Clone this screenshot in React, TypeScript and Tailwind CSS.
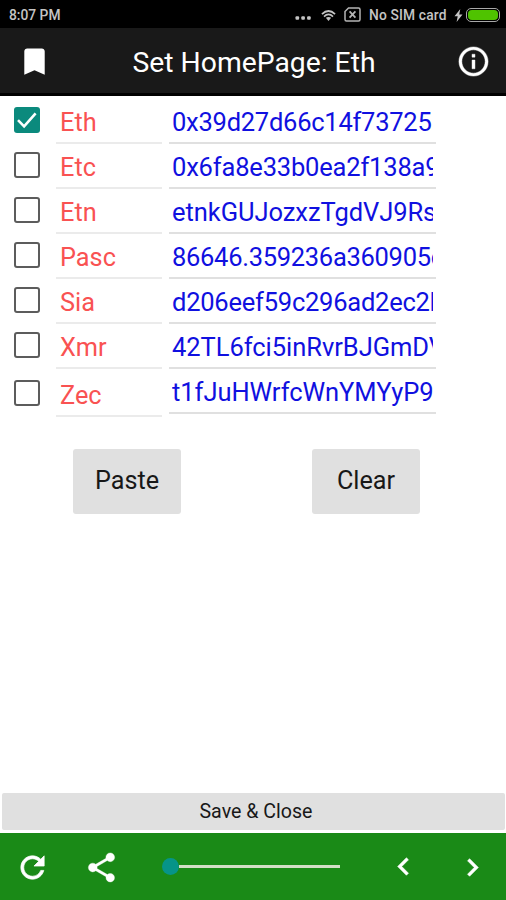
import { MdBookmark } from 'react-icons/md';

type Wallet = { name: string; address: string; spacing: string; checked?: boolean; last?: boolean };

const wallets: Wallet[] = [
  { name: 'Eth', address: '0x39d27d66c14f73725', spacing: 'tracking-[-0.25px]', checked: true },
  { name: 'Etc', address: '0x6fa8e33b0ea2f138a9', spacing: 'tracking-[-0.18px]' },
  { name: 'Etn', address: 'etnkGUJozxzTgdVJ9Rs', spacing: 'tracking-[-0.06px]' },
  { name: 'Pasc', address: '86646.359236a360905c', spacing: 'tracking-[-0.29px]' },
  { name: 'Sia', address: 'd206eef59c296ad2ec2b', spacing: 'tracking-[-0.23px]' },
  { name: 'Xmr', address: '42TL6fci5inRvrBJGmDV', spacing: 'tracking-[-0.04px]' },
  { name: 'Zec', address: 't1fJuHWrfcWnYMYyP9', spacing: 'tracking-[-0.05px]', last: true },
];

function Icon({ path, weight, className = '' }: { path: string; weight: number; className?: string }) {
  return (
    <svg className={`shrink-0 ${className}`} width="35" height="35" viewBox="0 0 24 24" fill="#fff" stroke="#fff" strokeWidth={weight}>
      <path d={path} />
    </svg>
  );
}

const INFO =
  'M11 7h2v2h-2zm0 4h2v6h-2zm1-9C6.48 2 2 6.48 2 12s4.48 10 10 10 10-4.48 10-10S17.52 2 12 2zm0 18c-4.41 0-8-3.59-8-8s3.59-8 8-8 8 3.59 8 8-3.59 8-8 8z';
const REFRESH =
  'M17.65 6.35C16.2 4.9 14.21 4 12 4c-4.42 0-7.99 3.58-7.99 8s3.57 8 7.99 8c3.73 0 6.84-2.55 7.73-6h-2.08c-.82 2.33-3.04 4-5.65 4-3.31 0-6-2.69-6-6s2.69-6 6-6c1.66 0 3.14.69 4.22 1.78L13 11h7V4l-2.35 2.35z';
const SHARE =
  'M18 16.08c-.76 0-1.44.3-1.96.77L8.91 12.7c.05-.23.09-.46.09-.7s-.04-.47-.09-.7l7.05-4.11c.54.5 1.25.81 2.04.81 1.66 0 3-1.34 3-3s-1.34-3-3-3-3 1.34-3 3c0 .24.04.47.09.7L8.04 9.81C7.5 9.31 6.79 9 6 9c-1.66 0-3 1.34-3 3s1.34 3 3 3c.79 0 1.5-.31 2.04-.81l7.12 4.16c-.05.21-.08.43-.08.65 0 1.61 1.31 2.92 2.92 2.92s2.92-1.31 2.92-2.92-1.31-2.92-2.92-2.92z';
const LEFT = 'M15.41 7.41L14 6l-6 6 6 6 1.41-1.41L10.83 12z';
const RIGHT = 'M10 6L8.59 7.41 13.17 12l-4.58 4.59L10 18l6-6z';

function StatusBar() {
  return (
    <div className="flex h-7 items-center bg-black pl-[9px] pr-[6px] pt-[2px] text-[13.8px] font-medium text-[#c4c4c4]">
      <span>8:07 PM</span>
      <svg className="ml-auto mt-[6px]" width="17" height="4" viewBox="0 0 17 4" fill="#c4c4c4">
        <rect x="0.5" y="0.3" width="3.6" height="3.4" rx="1" />
        <rect x="6.3" y="0.3" width="3.6" height="3.4" rx="1" />
        <rect x="12.1" y="0.3" width="3.6" height="3.4" rx="1" />
      </svg>
      <svg className="ml-[9px]" width="15" height="13" viewBox="0 0 16 13" fill="none" stroke="#c4c4c4" strokeWidth="1.8">
        <path d="M1 5Q8-1.6 15 5" />
        <path d="M3.2 7.6Q8 3.2 12.8 7.6" />
        <path d="M5.2 9Q8 7 10.8 9L8 12.4Z" fill="#c4c4c4" stroke="none" />
      </svg>
      <svg className="ml-[8px] mb-px" width="17" height="15" viewBox="0 0 17 15" fill="none" stroke="#b4b4b4" strokeWidth="1.5">
        <path d="M4.5 1H14.5Q16 1 16 2.5V12.5Q16 14 14.5 14H2.5Q1 14 1 12.5V4.5Z" />
        <path d="M5.6 4.4L11.4 10.6M11.4 4.4L5.6 10.6" strokeWidth="1.8" />
      </svg>
      <span className="ml-[8px] w-[78px] whitespace-nowrap tracking-[0.15px]">No SIM card</span>
      <svg className="ml-[7px]" width="9" height="13" viewBox="0 0 9 13" fill="#c4c4c4">
        <path d="M6.3 0L0.5 7.3H3.7L2.6 13L8.5 5.4H5.2Z" />
      </svg>
      <div className="ml-[3px] h-[14px] w-[34px] rounded-[5px] border border-[#a8a8a8] p-px">
        <div className="h-full rounded-[4px] bg-[#4fc300]" />
      </div>
    </div>
  );
}

function Checkbox({ checked }: { checked?: boolean }) {
  if (checked) {
    return (
      <div className="size-[26px] rounded-[3px] bg-[#0b8a7d]">
        <svg width="26" height="26" viewBox="0 0 26 26" fill="none" stroke="#fff" strokeWidth="2.6">
          <path d="M4 13.2L10.1 19.3L21.6 6.4" />
        </svg>
      </div>
    );
  }
  return <div className="size-[26px] rounded-[3px] border-[2.5px] border-[#5c5c5c]" />;
}

export default function App() {
  return (
    <div className="flex h-[900px] w-[506px] flex-col overflow-hidden bg-white font-[Roboto,sans-serif]">
      <StatusBar />
      <header className="flex h-[68px] items-center justify-between border-b-[3px] border-black bg-[#191919] pl-[17px] pr-[15px] text-white">
        <MdBookmark size={35} className="mt-px" />
        <h1 className="whitespace-nowrap pt-[4px] text-[28.3px] leading-8">Set HomePage: Eth</h1>
        <Icon path={INFO} weight={0.3} className="mt-[2px]" />
      </header>

      <main className="flex flex-1 flex-col">
        <div className="flex pl-[14px]">
          <div className="flex flex-col pt-[11px]">
            {wallets.map((w) => (
              <div key={w.name} className={w.last ? 'h-[45px] pt-[3px]' : 'h-[45px]'}>
                <Checkbox checked={w.checked} />
              </div>
            ))}
          </div>
          <div className="ml-4 flex w-[106px] flex-col pt-[3px] text-[25.3px] leading-[30px] text-[#f95252]">
            {wallets.map((w) => (
              <div key={w.name} className={`border-b-2 border-[#ebebeb] pl-[4px] ${w.last ? 'h-[48px] pt-[12px]' : 'h-[45px] pt-[9px]'}`}>
                {w.name}
              </div>
            ))}
          </div>
          <div className="ml-[7px] flex w-[267px] flex-col pt-[3px] text-[25.5px] leading-[30px] text-[#1010e0]">
            {wallets.map((w) => (
              <div key={w.name} className="h-[45px] border-b-2 border-[#e0e0e0] pl-[3px] pr-[3px] pt-[8px]">
                <div className={`overflow-hidden whitespace-nowrap ${w.spacing}`}>{w.address}</div>
              </div>
            ))}
          </div>
        </div>

        <div className="mt-[27px] flex gap-[131px] pl-[73px] text-[25.2px] text-[#181818]">
          <button className="h-[65px] w-[108px] rounded-[3px] bg-[#e0e0e0] pb-[2px]">Paste</button>
          <button className="h-[65px] w-[108px] rounded-[3px] bg-[#e0e0e0] pb-[2px]">Clear</button>
        </div>

        <button className="mb-[3px] ml-[2px] mr-px mt-auto h-[37px] rounded-[2px] bg-[#e0e0e0] pl-[5px] text-[19.6px] text-[#181818]">
          Save &amp; Close
        </button>
      </main>

      <footer className="flex h-[67px] items-center bg-[#1a8a17] pl-[15px] text-white">
        <Icon path={REFRESH} weight={0.5} className="mt-px" />
        <Icon path={SHARE} weight={0.25} className="ml-[34px] mt-px" />
        <div className="ml-[43px] flex w-[178px] items-center">
          <div className="size-[17px] rounded-full bg-[#069488]" />
          <div className="h-[3px] flex-1 bg-[#d3dfc6]" />
        </div>
        <Icon path={LEFT} weight={0.4} className="ml-[46px]" />
        <Icon path={RIGHT} weight={0.4} className="ml-[34px] mt-[2px]" />
      </footer>
    </div>
  );
}
